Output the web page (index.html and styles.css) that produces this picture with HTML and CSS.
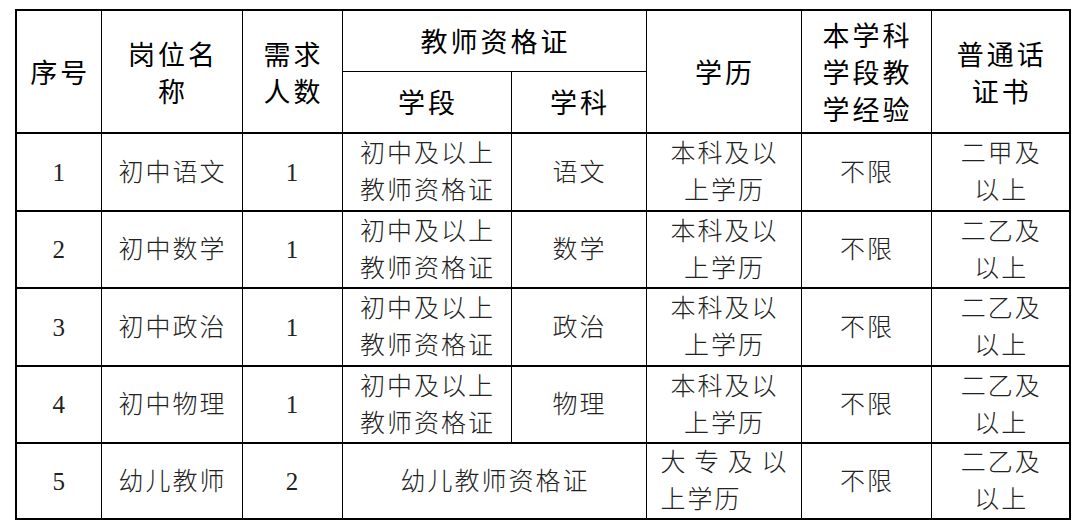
FILE: index.html
```html
<!DOCTYPE html>
<html lang="zh-CN">
<head>
<meta charset="utf-8">
<title>岗位表</title>
<link rel="stylesheet" href="styles.css">
</head>
<body>
<table class="grid">
  <colgroup>
    <col class="c1"><col class="c2"><col class="c3"><col class="c4"><col class="c5"><col class="c6"><col class="c7"><col class="c8">
  </colgroup>
  <thead>
    <tr class="h1">
      <th rowspan="2">序号</th>
      <th rowspan="2">岗位名<br>称</th>
      <th rowspan="2">需求<br>人数</th>
      <th colspan="2">教师资格证</th>
      <th rowspan="2">学历</th>
      <th rowspan="2">本学科<br>学段教<br>学经验</th>
      <th rowspan="2">普通话<br>证书</th>
    </tr>
    <tr class="h2">
      <th>学段</th>
      <th>学科</th>
    </tr>
  </thead>
  <tbody>
    <tr class="r1">
      <td>1</td><td>初中语文</td><td>1</td><td>初中及以上<br>教师资格证</td><td>语文</td><td>本科及以<br>上学历</td><td>不限</td><td>二甲及<br>以上</td>
    </tr>
    <tr class="r2">
      <td>2</td><td>初中数学</td><td>1</td><td>初中及以上<br>教师资格证</td><td>数学</td><td>本科及以<br>上学历</td><td>不限</td><td>二乙及<br>以上</td>
    </tr>
    <tr class="r1">
      <td>3</td><td>初中政治</td><td>1</td><td>初中及以上<br>教师资格证</td><td>政治</td><td>本科及以<br>上学历</td><td>不限</td><td>二乙及<br>以上</td>
    </tr>
    <tr class="r2">
      <td>4</td><td>初中物理</td><td>1</td><td>初中及以上<br>教师资格证</td><td>物理</td><td>本科及以<br>上学历</td><td>不限</td><td>二乙及<br>以上</td>
    </tr>
    <tr class="r3">
      <td>5</td><td>幼儿教师</td><td>2</td><td colspan="2">幼儿教师资格证</td><td class="just"><span class="jl">大专及以</span><span class="ll">上学历</span></td><td>不限</td><td>二乙及<br>以上</td>
    </tr>
  </tbody>
</table>
</body>
</html>
```
FILE: styles.css
```css
html, body {
  margin: 0;
  padding: 0;
  background: #fff;
}
.grid {
  margin: 9px 0 0 15px;
  border-collapse: collapse;
  table-layout: fixed;
  width: 1054px;
  border: 2px solid #000;
}
.c1 { width: 85px; }
.c2 { width: 141px; }
.c3 { width: 100px; }
.c4 { width: 169px; }
.c5 { width: 135px; }
.c6 { width: 155px; }
.c7 { width: 130px; }
.c8 { width: 139px; }
.grid th,
.grid td {
  border: 1px solid #000;
  text-align: center;
  vertical-align: middle;
  padding: 0 0 0 2px;
}
.grid th {
  font-family: "Noto Sans CJK SC", sans-serif;
  font-weight: 400;
  font-size: 27px;
  letter-spacing: 3px;
  line-height: 37px;
  color: #000;
  padding-left: 3px;
}
.grid td {
  font-family: "Liberation Serif", "Noto Sans CJK SC", serif;
  font-weight: 300;
  font-size: 25px;
  letter-spacing: 2px;
  line-height: 37px;
  color: #222;
}
.grid thead tr.h1 { height: 61px; }
.grid thead tr.h2 { height: 62px; }
.grid tbody tr.r1 { height: 78px; }
.grid tbody tr.r2 { height: 77px; }
.grid tbody tr.r3 { height: 76px; }
.grid tbody tr td { border-top-width: 2px; }
.grid td.just {
  padding: 0 14px;
  text-align: left;
  letter-spacing: 0;
}
.jl {
  display: block;
  text-align: justify;
  text-align-last: justify;
}
.ll {
  display: block;
  letter-spacing: 2px;
}
```
